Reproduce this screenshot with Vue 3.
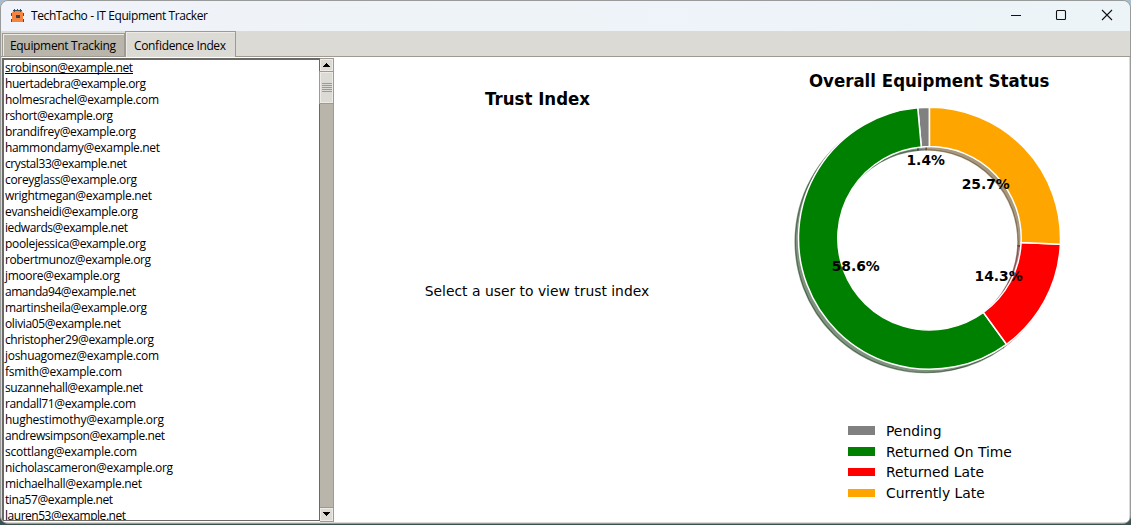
<script setup>
const users = [
  ['srobinson@example.net', 128], ['huertadebra@example.org', 141], ['holmesrachel@example.com', 154],
  ['rshort@example.org', 108], ['brandifrey@example.org', 131], ['hammondamy@example.net', 155],
  ['crystal33@example.net', 122], ['coreyglass@example.org', 132], ['wrightmegan@example.net', 147],
  ['evansheidi@example.org', 133], ['iedwards@example.net', 123], ['poolejessica@example.org', 141],
  ['robertmunoz@example.org', 146], ['jmoore@example.org', 115], ['amanda94@example.net', 131],
  ['martinsheila@example.org', 142], ['olivia05@example.net', 116], ['christopher29@example.org', 149],
  ['joshuagomez@example.com', 154], ['fsmith@example.com', 117], ['suzannehall@example.net', 138],
  ['randall71@example.com', 131], ['hughestimothy@example.org', 159], ['andrewsimpson@example.net', 160],
  ['scottlang@example.com', 132], ['nicholascameron@example.org', 168], ['michaelhall@example.net', 137],
  ['tina57@example.net', 108], ['lauren53@example.net', 121],
]

const status = [
  { label: 'Pending', value: 1, color: '#808080', shade: '#262626', pct: '1.4%', x: 925.7, y: 165 },
  { label: 'Returned On Time', value: 41, color: '#008000', shade: '#002600', pct: '58.6%', x: 855.7, y: 271 },
  { label: 'Returned Late', value: 10, color: '#ff0000', shade: '#4d0000', pct: '14.3%', x: 998.6, y: 281 },
  { label: 'Currently Late', value: 18, color: '#ffa500', shade: '#4d3200', pct: '25.7%', x: 985.7, y: 189 },
]

const CX = 929.5
const CY = 238.3
const R = 131
const r = 91.7
const point = (radius, a) => `${(CX + radius * Math.cos(a)).toFixed(2)} ${(CY - radius * Math.sin(a)).toFixed(2)}`
let angle = Math.PI / 2
const wedges = status.map((s) => {
  const from = angle
  const to = from + (s.value / 70) * Math.PI * 2
  angle = to
  const large = to - from > Math.PI ? 1 : 0
  return {
    ...s,
    d: `M${point(R, from)}A${R} ${R} 0 ${large} 0 ${point(R, to)}L${point(r, to)}A${r} ${r} 0 ${large} 1 ${point(r, from)}Z`,
  }
})
</script>

<template>
  <div class="desktop">
    <div class="window">
      <header class="titlebar">
        <svg class="logo" width="14" height="16" viewBox="0 0 14 16">
          <path d="M2 4h9l1 2v9H1V6z" fill="#f5843f" />
          <path d="M0 6h1v3H0zM12 6h1v3h-1zM0 12h1v3H0zM12 12h1v3h-1z" fill="#4b4b55" />
          <path d="M2 3.5h9M3.5 2v3M6.5 2v2M9.5 2v3" stroke="#35515c" fill="none" />
          <path d="M5 8h4v3H5z" fill="#39434c" />
        </svg>
        <svg class="title" width="200" height="18"><text x="0" y="13" textLength="177">TechTacho - IT Equipment Tracker</text></svg>
        <svg class="controls" width="106" height="14" viewBox="0 0 106 14" fill="none" stroke="#111" stroke-width="1.1">
          <path d="M1 7.5h10" />
          <rect x="46.5" y="2.5" width="9" height="9" rx="1" />
          <path d="M92 2l10 10M102 2L92 12" />
        </svg>
      </header>
      <nav class="tabs">
        <div class="tab idle"><svg width="108" height="22"><text x="1" y="16" textLength="106">Equipment Tracking</text></svg></div>
        <div class="tab active"><svg width="94" height="23"><text x="1" y="17" textLength="92">Confidence Index</text></svg></div>
      </nav>
      <main class="content">
        <div class="listbox">
          <svg v-for="(u, i) in users" :key="u[0]" class="user" width="300" height="16">
            <text x="0" y="11" :textLength="u[1]">{{ u[0] }}</text>
            <path v-if="i === 0" d="M0 12.5h128" stroke="#000" />
          </svg>
        </div>
        <div class="scrollbar">
          <div class="arrow"><svg width="9" height="5"><path d="M4 0h1v1h1v1h1v1h1v1H1V3h1V2h1V1h1z" /></svg></div>
          <div class="thumb"><i v-for="n in 5" :key="n"></i></div>
          <div class="trough"></div>
          <div class="arrow down"><svg width="9" height="5"><path d="M1 0h7v1H7v1H6v1H5v1H4V3H3V2H2V1H1z" /></svg></div>
        </div>
        <svg class="charts" width="794" height="465" viewBox="334 57 794 465">
          <g class="heading" text-anchor="middle">
            <text x="537.5" y="105" textLength="105" lengthAdjust="spacingAndGlyphs">Trust Index</text>
            <text x="929.2" y="87" textLength="240.5" lengthAdjust="spacingAndGlyphs">Overall Equipment Status</text>
          </g>
          <text class="label" x="537" y="296" text-anchor="middle">Select a user to view trust index</text>
          <g transform="translate(-3.3 3.3)">
            <path v-for="w in wedges" :key="w.label" :d="w.d" :fill="w.shade" :stroke="w.shade" fill-opacity=".5" stroke-opacity=".5" stroke-width="1.39" />
          </g>
          <path v-for="w in wedges" :key="w.label" :d="w.d" :fill="w.color" stroke="#fff" stroke-width="1.5" />
          <text v-for="w in wedges" :key="w.pct" class="pct" :x="w.x" :y="w.y" text-anchor="middle">{{ w.pct }}</text>
          <g v-for="(s, i) in status" :key="s.label">
            <rect x="848" :y="[426, 447, 468, 489][i]" width="27" :height="[9, 9, 8, 8][i]" :fill="s.color" />
            <text class="label" x="886" :y="[436, 457, 477, 498][i]">{{ s.label }}</text>
          </g>
        </svg>
      </main>
    </div>
  </div>
</template>

<style>
body {
  margin: 0;
  overflow: hidden;
}
</style>

<style scoped>
.desktop {
  box-sizing: border-box;
  width: 1131px;
  height: 525px;
  background: linear-gradient(#a9bcc9 0, #a9bcc9 50px, #8f8f8c 150px, #77736e 430px, #3c5150 500px);
}
.window {
  box-sizing: border-box;
  width: 1131px;
  height: 524px;
  border: 1px solid #999b9b;
  border-radius: 8px;
  background: #dcdad5;
  overflow: hidden;
  display: flex;
  flex-direction: column;
}
.titlebar {
  height: 30px;
  flex: none;
  display: flex;
  align-items: center;
  justify-content: space-between;
  box-sizing: border-box;
  padding: 0 14px 2px 10px;
  background: linear-gradient(90deg, #f0f3f9, #ecf4f8);
}
.logo {
  flex: none;
}
.title {
  margin: 1px auto 0 6px;
}
.title text {
  font: 12px "Open Sans", "Noto Sans", sans-serif;
}
.controls {
  flex: none;
}
.tabs {
  height: 26px;
  flex: none;
  display: flex;
  align-items: flex-end;
  box-sizing: border-box;
  border-bottom: 1px solid #9e9a91;
  padding-left: 1px;
}
.tab {
  box-sizing: border-box;
  border: 1px solid #9e9a91;
  border-bottom: 0;
  box-shadow: inset 1px 1px #eeebe7;
}
.tab svg,
.user {
  display: block;
  overflow: visible;
}
.tab text,
.user text {
  font: 12px "Open Sans", "Noto Sans", sans-serif;
}
.idle {
  width: 123px;
  height: 23px;
  padding-left: 6px;
  background: #bab5ab;
}
.active {
  width: 111px;
  height: 26px;
  margin-bottom: -1px;
  padding-left: 7px;
  background: #dcdad5;
}
.active svg {
  margin-top: 1px;
}
.content {
  display: flex;
  height: 465px;
  width: 1127px;
  margin-left: 1px;
  background: #fff;
}
.listbox {
  box-sizing: border-box;
  width: 318px;
  height: 463px;
  margin-top: 1px;
  padding: 1px 0 0 1px;
  border: 1px solid #6b6965;
  border-left-width: 2px;
  border-top-width: 2px;
  overflow: hidden;
}
.scrollbar {
  box-sizing: border-box;
  width: 14px;
  height: 464px;
  margin-top: 1px;
  display: flex;
  flex-direction: column;
  background: #bab5ab;
  border: 1px solid #9e9a91;
  border-left: 0;
}
.arrow,
.thumb {
  box-sizing: border-box;
  background: #dcdad5;
  border: 1px solid #eeebe7;
  display: flex;
  align-items: center;
  justify-content: center;
}
.arrow {
  height: 12px;
  flex: none;
}
.down {
  height: 13px;
  box-shadow: 0 -1px #9e9a91;
}
.thumb {
  height: 31px;
  flex: none;
  flex-direction: column;
  gap: 1px;
  box-shadow: 0 0 0 1px #9e9a91;
  margin-top: 1px;
}
.thumb i {
  width: 10px;
  height: 1px;
  background: #9e9a91;
}
.trough {
  flex: 1;
}
.charts {
  display: block;
}
.heading text {
  font: bold 17.3px "DejaVu Sans", sans-serif;
}
.label {
  font: 13.89px "DejaVu Sans", sans-serif;
}
.pct {
  font: bold 13.89px "DejaVu Sans", sans-serif;
}
</style>
